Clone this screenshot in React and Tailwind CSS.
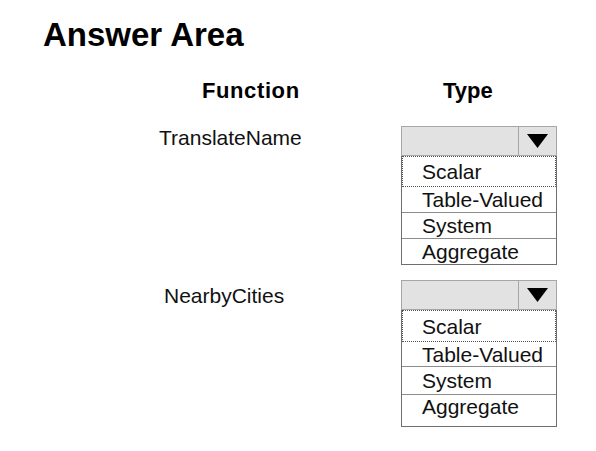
const options = ["Scalar", "Table-Valued", "System", "Aggregate"];

const items = [
  {
    name: "TranslateName",
    nameClass: "pt-[1px]",
    rows: ["h-[31px] items-center", "h-[26px] items-center", "h-[26px] items-center", "h-[25px] items-center"],
  },
  {
    name: "NearbyCities",
    nameClass: "pt-[5px] pl-[5px]",
    rows: ["h-[32px] items-center", "h-[25px] items-center", "h-[28px] items-center", "h-[31px] items-start pt-[1px]"],
  },
];

function Dropdown({ rows }) {
  return (
    <div className="w-[156px]">
      <div className="flex h-[30px] border border-[#a6a6a6] bg-[#e2e2e2]">
        <div className="flex-1" />
        <div className="flex w-[38px] items-center justify-center border-l border-[#a6a6a6]">
          <svg width="21" height="14" viewBox="0 0 21 14">
            <polygon points="0,0 21,0 10.5,14" fill="#000" />
          </svg>
        </div>
      </div>
      <ul className="border-x border-b border-[#6f6f6f] bg-white">
        {options.map((option, i) => (
          <li
            key={option}
            className={`flex ${rows[i]} ${
              i === 0
                ? "border border-dotted border-[#555] pl-[19px]"
                : i === options.length - 1
                  ? "pl-[20px]"
                  : "border-b border-[#8c8c8c] pl-[20px]"
            }`}
          >
            {option}
          </li>
        ))}
      </ul>
    </div>
  );
}

export default function App() {
  return (
    <div className="min-h-[451px] w-[596px] bg-white font-['Liberation_Sans',Arial,sans-serif] text-[#111]">
      <h1 className="pl-[43px] pt-[18px] text-[33px] font-bold leading-none text-black">Answer Area</h1>

      <div className="ml-[159px] mt-[29px] grid grid-cols-[242px_156px] gap-y-[15px]">
        <div className="pl-[43px] text-[22px] font-bold leading-none tracking-[0.6px] text-black">Function</div>
        <div className="pl-[42px] text-[22px] font-bold leading-none text-black">Type</div>

        {items.map((item, idx) => (
          <div key={item.name} className="contents">
            <div className={`text-[21px] leading-none ${item.nameClass} ${idx === 0 ? "mt-[9px]" : ""}`}>{item.name}</div>
            <div className={`text-[21px] leading-none ${idx === 0 ? "mt-[9px]" : ""}`}>
              <Dropdown rows={item.rows} />
            </div>
          </div>
        ))}
      </div>
    </div>
  );
}
